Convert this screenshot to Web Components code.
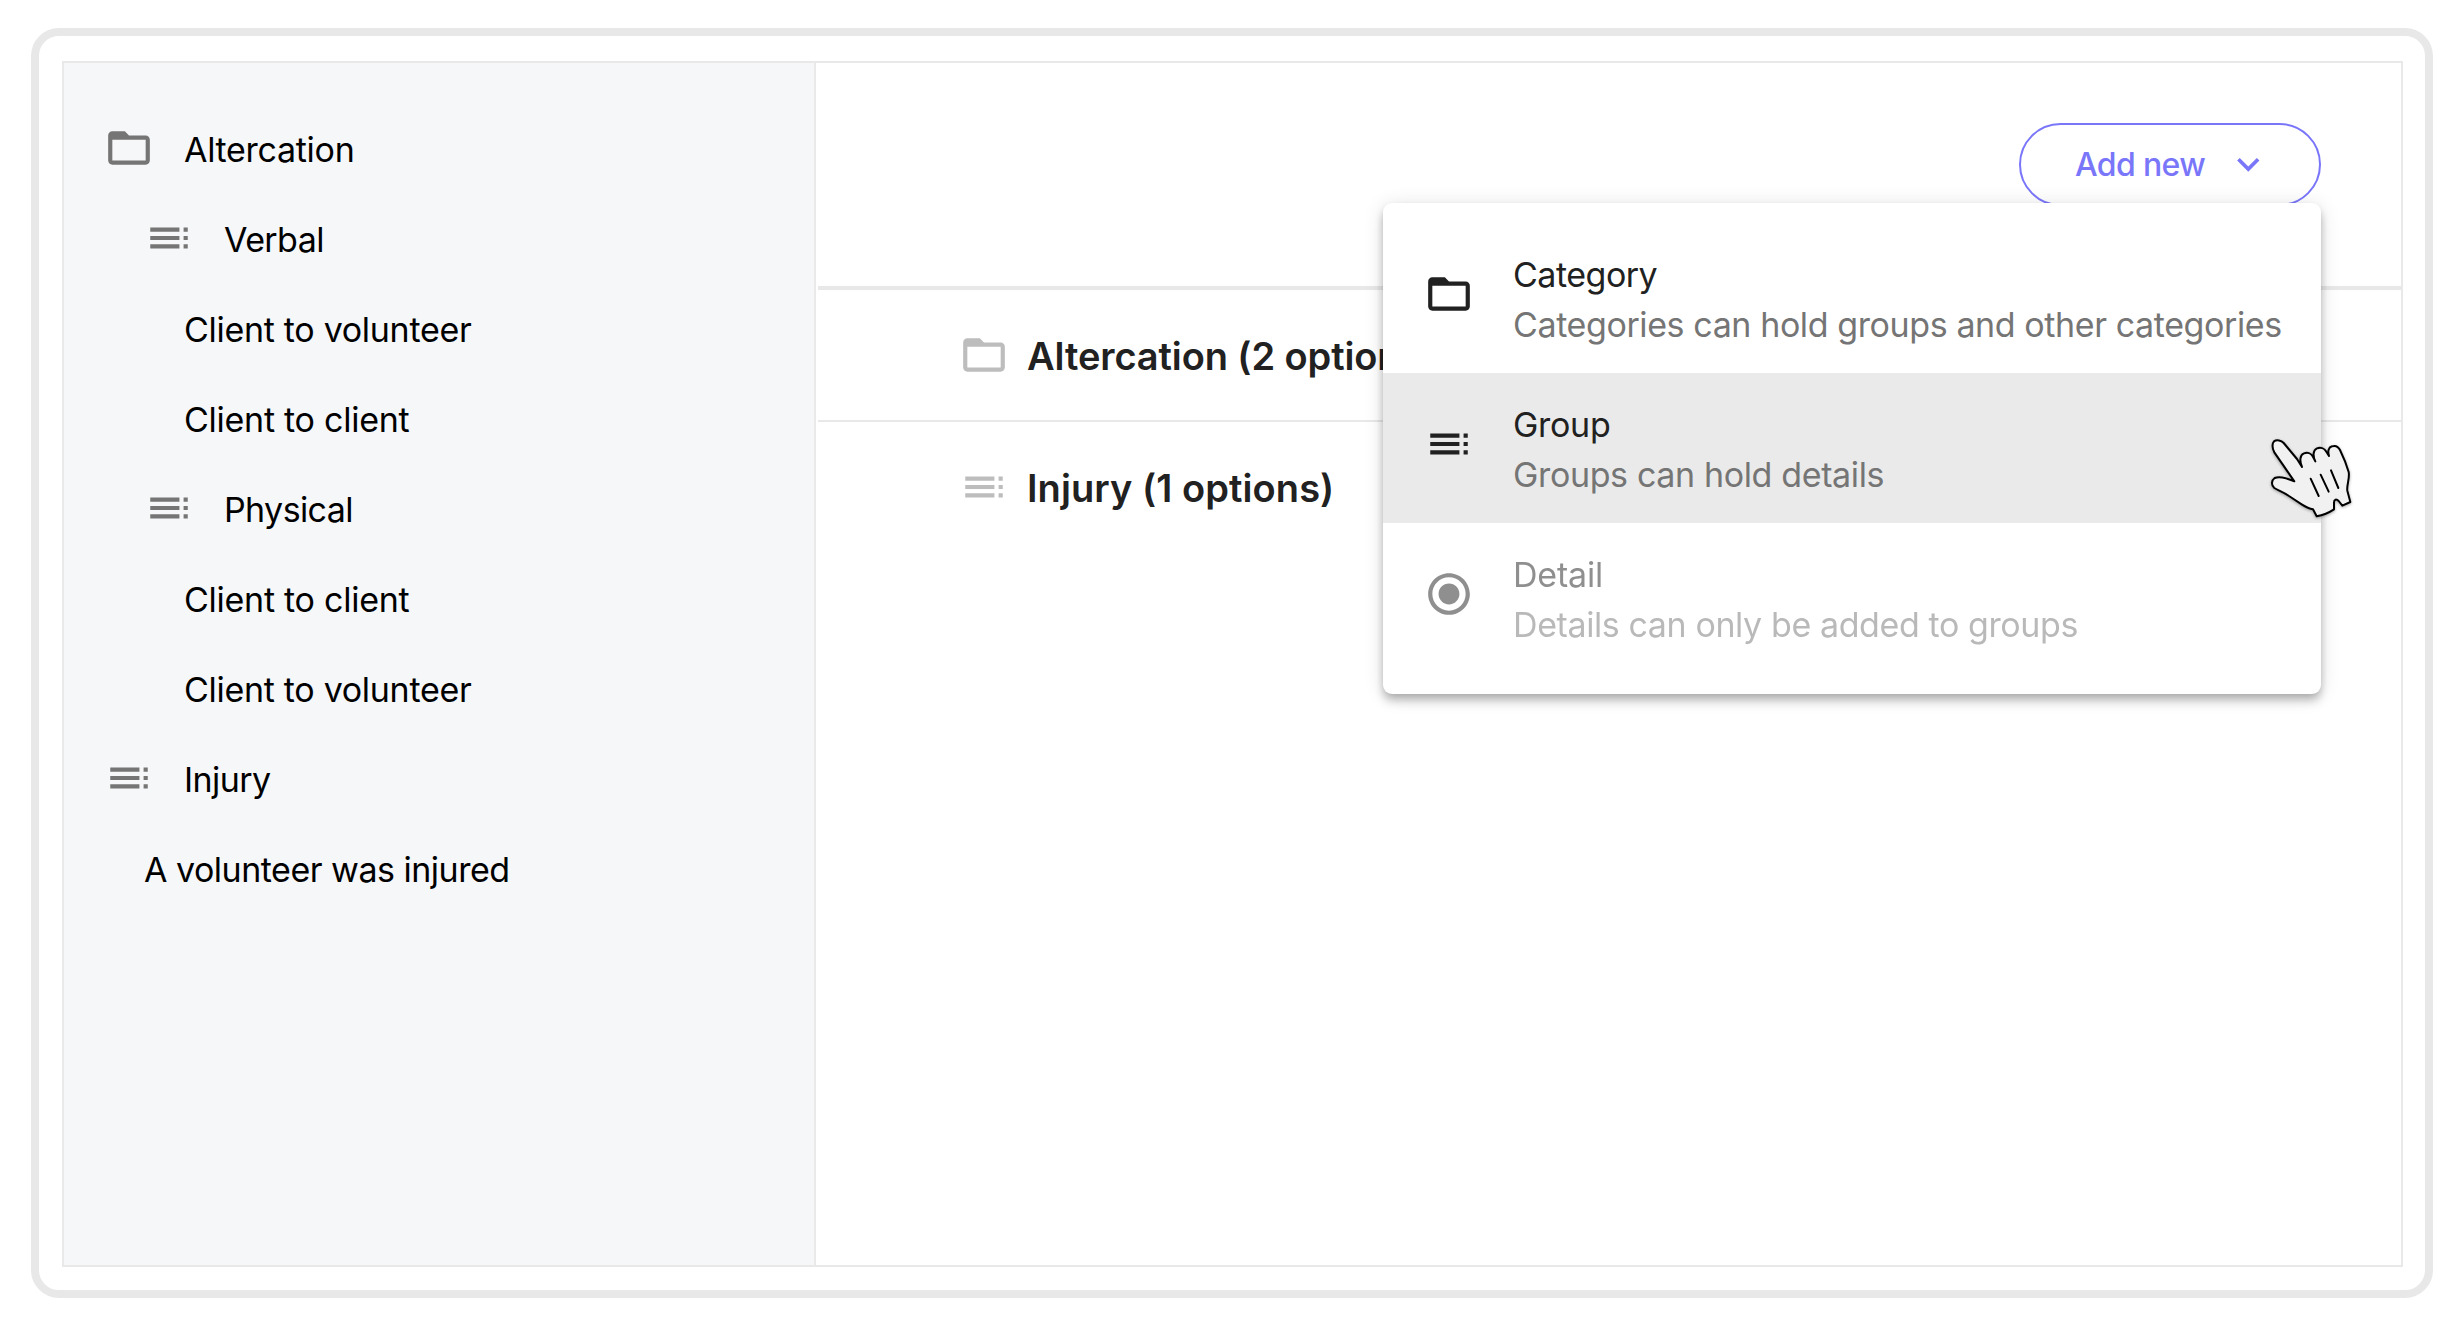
<!DOCTYPE html>
<html lang="en">
<head>
<meta charset="utf-8">
<title>Options</title>
<style>
  body { margin: 0; background: #fff; font-family: Inter, "Liberation Sans", sans-serif; font-size: 34px; color: #000; }
</style>
</head>
<body>
<app-frame>
  <side-tree slot="side">
    <tree-row icon="folder" depth="0" track="-0.3">Altercation</tree-row>
    <tree-row icon="toc" depth="1" track="-0.6">Verbal</tree-row>
    <tree-row depth="2" track="-0.3">Client to volunteer</tree-row>
    <tree-row depth="2" track="-0.26">Client to client</tree-row>
    <tree-row icon="toc" depth="1" track="-0.6">Physical</tree-row>
    <tree-row depth="2" track="-0.26">Client to client</tree-row>
    <tree-row depth="2" track="-0.3">Client to volunteer</tree-row>
    <tree-row icon="toc" depth="0" track="-0.6">Injury</tree-row>
    <tree-row depth="1" track="-0.5">A volunteer was injured</tree-row>
  </side-tree>
  <main-toolbar>
    <drop-button>Add new
      <drop-menu slot="menu">
        <menu-option icon="folder" track="-0.5" dtrack="-0.4">Category<span slot="desc">Categories can hold groups and other categories</span></menu-option>
        <menu-option icon="toc" active track="-0.3" dtrack="-0.36">Group<span slot="desc">Groups can hold details</span></menu-option>
        <menu-option icon="radio" disabled track="-0.19" dtrack="-0.4">Detail<span slot="desc">Details can only be added to groups</span></menu-option>
      </drop-menu>
    </drop-button>
  </main-toolbar>
  <option-row icon="folder" track="-0.1">Altercation (2 options)</option-row>
  <option-row icon="toc" last track="0.07">Injury (1 options)</option-row>
</app-frame>
<hand-cursor></hand-cursor>

<script>
const define = (name, html, setup) => customElements.define(name, class extends HTMLElement {
  constructor() {
    super();
    const t = document.createElement('template');
    t.innerHTML = html;
    this.attachShadow({ mode: 'open' }).append(t.content.cloneNode(true));
  }
  connectedCallback() { if (setup) setup(this, this.shadowRoot); }
});

const PATHS = {
  folder: 'M20 6h-8l-2-2H4c-1.1 0-2 .9-2 2v12c0 1.1.9 2 2 2h16c1.1 0 2-.9 2-2V8c0-1.1-.9-2-2-2zm0 12H4V8h16v10z',
  toc: 'M3 9h14V7H3v2zm0 4h14v-2H3v2zm0 4h14v-2H3v2zm16 0h2v-2h-2v2zm0-10v2h2V7h-2zm0 6h2v-2h-2v2z',
  radio: 'M12 7c-2.76 0-5 2.24-5 5s2.24 5 5 5 5-2.24 5-5-2.24-5-5-5zm0-5C6.48 2 2 6.48 2 12s4.48 10 10 10 10-4.48 10-10S17.52 2 12 2zm0 18c-4.42 0-8-3.58-8-8s3.58-8 8-8 8 3.58 8 8-3.58 8-8 8z',
  chevron: 'M7.41 8.59 12 13.17l4.59-4.58L18 10l-6 6-6-6z'
};
define('md-icon', `<style>
  :host { display: block; flex: none; width: 50px; height: 50px; }
  svg { display: block; width: 100%; height: 100%; fill: currentColor; }
</style><svg viewBox="0 0 24 24"><path/></svg>`,
  (el, root) => root.querySelector('path').setAttribute('d', PATHS[el.getAttribute('name')] || ''));

// Puts the icon named by the host's "icon" attribute in place of the .icon holder.
const placeIcon = (el, root) => {
  const holder = root.querySelector('.icon'), name = el.getAttribute('icon');
  if (!name) return holder.remove();
  const icon = document.createElement('md-icon');
  icon.setAttribute('name', name);
  holder.replaceWith(icon);
};

define('app-frame', `<style>
  :host { display: flex; box-sizing: border-box; width: 2402px; height: 1270px; margin: 28px 31px;
    padding: 25px 22px 23px 23px; border: 8px solid #e8e8e8; border-radius: 28px; }
  .panel { display: flex; flex: 1; border: 2px solid #e9e9e9; }
  main { flex: 1; display: flex; flex-direction: column; padding-left: 2px; }
</style><div class="panel"><slot name="side"></slot><main><slot></slot></main></div>`);

define('side-tree', `<style>
  :host { display: flex; flex-direction: column; box-sizing: border-box; width: 752px; flex: none;
    padding: 42px 0 0 40px; background: #f6f7f9; border-right: 2px solid #e9e9e9; }
</style><slot></slot>`);

define('tree-row', `<style>
  :host { display: flex; align-items: center; gap: 30px; height: 90px; line-height: 90px; white-space: nowrap; }
  md-icon { color: #757575; margin-bottom: 4px; }
</style><span class="icon"></span><slot></slot>`, (el, root) => {
  placeIcon(el, root);
  el.style.paddingLeft = el.getAttribute('depth') * 40 + 'px';
  el.style.letterSpacing = el.getAttribute('track') + 'px';
});

define('main-toolbar', `<style>
  :host { display: flex; justify-content: flex-end; align-items: flex-start; box-sizing: border-box;
    height: 227px; padding: 60px 80px 0 0; border-bottom: 4px solid #e8e8e8; }
</style><slot></slot>`);

define('drop-button', `<style>
  :host { display: block; position: relative; }
  .btn { display: flex; align-items: center; gap: 20px; box-sizing: border-box; width: 302px; height: 83px;
    padding: 0 48px 0 54px; border: 2px solid #7a76fa; border-radius: 42px; background: #fff; color: #7a76fa;
    font: 500 32px Inter, "Liberation Sans", sans-serif; letter-spacing: -0.65px; white-space: nowrap; }
  md-icon { width: 44.6px; height: 44.6px; margin-left: auto; }
</style><div class="btn"><span><slot></slot></span><md-icon name="chevron"></md-icon></div><slot name="menu"></slot>`);

define('drop-menu', `<style>
  :host { display: block; position: absolute; z-index: 2; top: 80px; right: 0; box-sizing: border-box; width: 938px; height: 490.5px;
    padding: 20px 0; background: #fff; border-radius: 9px;
    box-shadow: 0 4px 8px -2px rgba(0,0,0,.2), 0 8px 10px 0 rgba(0,0,0,.14), 0 2px 20px 0 rgba(0,0,0,.12); }
</style><slot></slot>`);

define('menu-option', `<style>
  :host { display: flex; gap: 39.5px; box-sizing: border-box; height: 150px; padding: 27px 0 0 40.5px; line-height: 50px;
    white-space: nowrap; color: #212121; }
  :host([active]) { background: #eaeaea; }
  :host([disabled]) { opacity: .5; }
  md-icon { margin-top: 19px; }
  .text { display: flex; flex-direction: column; }
  .desc { color: #757575; }
</style><span class="icon"></span><div class="text"><div class="title"><slot></slot></div><div class="desc"><slot name="desc"></slot></div></div>`,
  (el, root) => {
    placeIcon(el, root);
    // The title takes its tracking from the shadow wrapper, the slotted description carries its own.
    root.querySelector('.title').style.letterSpacing = el.getAttribute('track') + 'px';
    el.style.letterSpacing = el.getAttribute('track') + 'px';
    el.querySelector('[slot=desc]').style.letterSpacing = el.getAttribute('dtrack') + 'px';
  });

define('option-row', `<style>
  :host { display: flex; align-items: center; gap: 18px; box-sizing: border-box; height: 132px; padding: 1px 0 0 141px;
    border-bottom: 2px solid #e8e8e8; font-size: 38px; font-weight: 600; color: #212121; white-space: nowrap; }
  :host([last]) { border-color: transparent; }
  md-icon { color: #bdbdbd; margin-bottom: 1px; }
</style><span class="icon"></span><span><slot></slot></span>`, (el, root) => {
  placeIcon(el, root);
  el.style.letterSpacing = el.getAttribute('track') + 'px';
});

define('hand-cursor', `<style>
  :host { display: block; position: absolute; z-index: 5; left: 2240px; top: 410px; width: 140px; height: 130px; }
  svg { display: block; width: 100%; height: 100%; filter: drop-shadow(0 1px 1.5px rgba(0,0,0,.35)); }
</style><svg viewBox="0 0 420 390" fill="none" stroke="#000" stroke-width="6" stroke-linecap="round" stroke-linejoin="round">
  <path fill="#f1f1f1" d="M163 214 L103 127 C96 114 96 100 102 94 C110 88 124 91 131 99 L171 147 L186 171 C178 152 180 134 192 130 C204 126 214 131 218 139 L226 154 C218 138 219 120 231 115 C243 111 254 116 259 125 L267 138 C263 124 265 112 276 109 C288 105 295 110 300 120 Q317 155 326 186 C330 206 319 226 322 242 L331 276 L307 287 L296 273 C289 266 282 268 282 277 L282 298 C268 307 250 315 230 319 L219 298 C206 296 196 290 185 283 L147 258 C130 246 116 242 103 234 C93 226 94 211 104 204 C120 197 145 206 163 214 Z"/>
  <path d="M212 206 L236 258 M242 194 L266 245 M273 181 L295 234"/>
</svg>`);
</script>
</body>
</html>
